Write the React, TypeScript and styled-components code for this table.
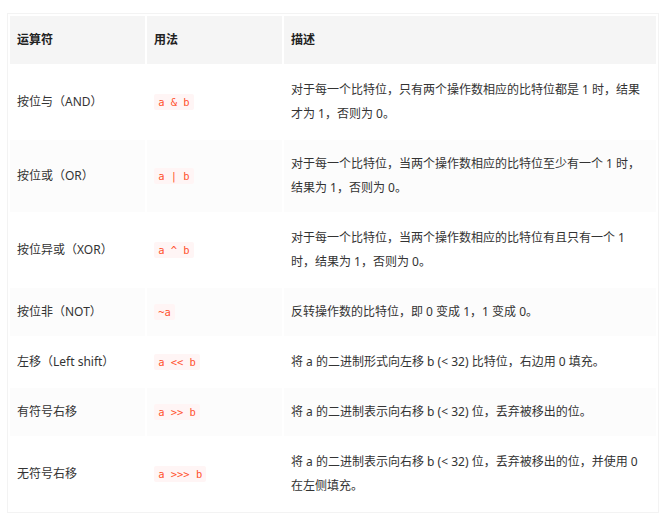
import React from "react";
import styled, { createGlobalStyle } from "styled-components";

const Global = createGlobalStyle`
  html, body { margin: 0; padding: 0; background: #ffffff; }
  body {
    font-family: "Noto Sans", "Noto Sans CJK SC", sans-serif;
    color: #333333;
  }
`;

const Page = styled.div`
  padding: 13px 0 0 7px;
`;

const Table = styled.table`
  border: 1px solid #f3f3f3;
  border-spacing: 2px;
  border-collapse: separate;
  table-layout: fixed;
  width: 652px;
  font-size: 12px;
`;

const Th = styled.th`
  background: #f5f5f5;
  padding: 12px 7px;
  line-height: 24px;
  text-align: left;
  font-weight: 700;
  color: #222222;
`;

const Row = styled.tr<{ $striped: boolean }>`
  background: ${(p) => (p.$striped ? "#fcfcfc" : "#ffffff")};
`;

const Td = styled.td`
  padding: 12px 7px;
  line-height: 24px;
  vertical-align: middle;
  color: #333333;
`;

const Code = styled.code`
  display: inline-block;
  vertical-align: middle;
  font-family: "DejaVu Sans Mono", "Liberation Mono", monospace;
  font-size: 0.87em;
  line-height: 16px;
  padding: 0 0.4em;
  margin-top: -2px;
  border-radius: 2px;
  background: #fff5f5;
  color: #ff502c;
  white-space: pre;
`;

type Item = { op: string; code: string; desc: string[] };

const rows: Item[] = [
  {
    op: "按位与（AND）",
    code: "a & b",
    desc: ["对于每一个比特位，只有两个操作数相应的比特位都是 1 时，结果", "才为 1，否则为 0。"],
  },
  {
    op: "按位或（OR）",
    code: "a | b",
    desc: ["对于每一个比特位，当两个操作数相应的比特位至少有一个 1 时，", "结果为 1，否则为 0。"],
  },
  {
    op: "按位异或（XOR）",
    code: "a ^ b",
    desc: ["对于每一个比特位，当两个操作数相应的比特位有且只有一个 1", "时，结果为 1，否则为 0。"],
  },
  { op: "按位非（NOT）", code: "~a", desc: ["反转操作数的比特位，即 0 变成 1，1 变成 0。"] },
  {
    op: "左移（Left shift）",
    code: "a << b",
    desc: ["将 a 的二进制形式向左移 b (< 32) 比特位，右边用 0 填充。"],
  },
  {
    op: "有符号右移",
    code: "a >> b",
    desc: ["将 a 的二进制表示向右移 b (< 32) 位，丢弃被移出的位。"],
  },
  {
    op: "无符号右移",
    code: "a >>> b",
    desc: ["将 a 的二进制表示向右移 b (< 32) 位，丢弃被移出的位，并使用 0", "在左侧填充。"],
  },
];

export default function App() {
  return (
    <Page>
      <Global />
      <Table>
        <colgroup>
          <col style={{ width: 135 }} />
          <col style={{ width: 135 }} />
          <col style={{ width: 372 }} />
        </colgroup>
        <thead>
          <tr>
            <Th>运算符</Th>
            <Th>用法</Th>
            <Th>描述</Th>
          </tr>
        </thead>
        <tbody>
          {rows.map((r, i) => (
            <Row key={r.op} $striped={i % 2 === 1}>
              <Td>{r.op}</Td>
              <Td>
                <Code>{r.code}</Code>
              </Td>
              <Td>
                {r.desc.map((line, j) => (
                  <React.Fragment key={j}>
                    {j > 0 && <br />}
                    {line}
                  </React.Fragment>
                ))}
              </Td>
            </Row>
          ))}
        </tbody>
      </Table>
    </Page>
  );
}
